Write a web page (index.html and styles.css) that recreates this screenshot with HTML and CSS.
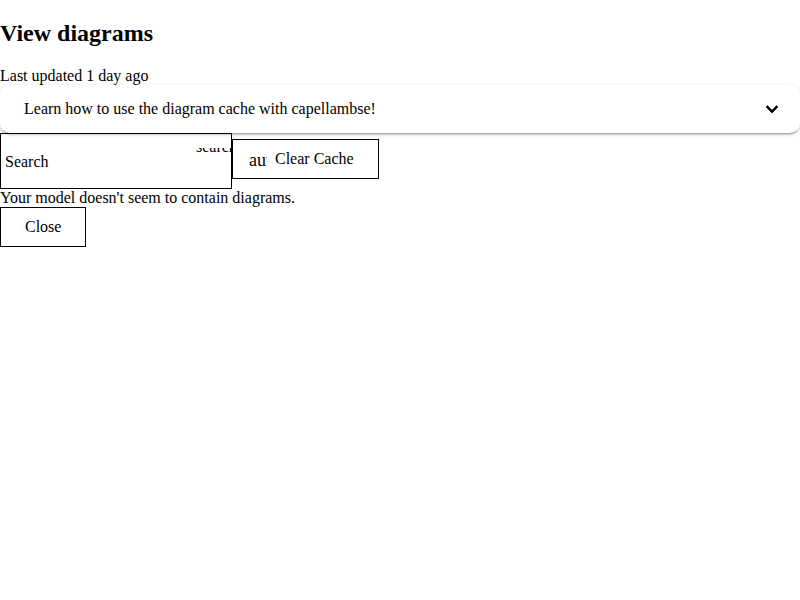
FILE: index.html
```html
<!DOCTYPE html>
<html>
<head>
<meta charset="utf-8">
<link rel="stylesheet" href="styles.css">
</head>
<body>
<h2 class="title">View diagrams</h2>
<div class="updated">Last updated 1 day ago</div>
<div class="panel">
  <div class="panel-header">
    <span class="panel-title">Learn how to use the diagram cache with capellambse!</span>
    <svg class="chevron" width="24" height="24" viewBox="0 0 24 24"><path d="M16.59 8.59L12 13.17 7.41 8.59 6 10l6 6 6-6z"/></svg>
  </div>
</div>
<div class="toolbar">
  <div class="field">
    <span class="field-label">Search</span>
    <span class="field-icon"><span class="field-icon-text">search</span></span>
  </div>
  <button class="btn btn-icon"><span class="icon">autorenew</span>Clear Cache</button>
</div>
<div class="empty">Your model doesn't seem to contain diagrams.</div>
<button class="btn btn-close">Close</button>
</body>
</html>
```

FILE: styles.css
```css
html, body {
  margin: 0;
  padding: 0;
  background: #fff;
  color: #000;
  font-family: "Liberation Serif", "Times New Roman", serif;
  font-size: 16px;
}
.title {
  font-size: 24px;
  font-weight: bold;
  margin: 19.92px 0;
}
.updated {
  line-height: normal;
}
.panel {
  background: #fff;
  border-radius: 10px;
  box-shadow: 0 3px 1px -2px rgba(0,0,0,.2), 0 2px 2px 0 rgba(0,0,0,.14), 0 1px 5px 0 rgba(0,0,0,.12);
}
.panel-header {
  height: 48px;
  display: flex;
  align-items: center;
  padding: 0 16px 0 24px;
}
.panel-title {
  flex: 1;
}
.chevron {
  display: block;
  fill: #000;
  stroke: #000;
  stroke-width: 0.6;
}
.toolbar {
  display: flex;
  align-items: flex-start;
}
.field {
  position: relative;
  box-sizing: border-box;
  width: 232px;
  height: 56px;
  border: 1px solid #000;
  padding-left: 4px;
  display: flex;
  align-items: center;
  overflow: hidden;
}
.field-label {
  margin-top: 3px;
}
.field-icon {
  position: absolute;
  left: 195px;
  top: 14px;
  height: 6px;
  overflow: hidden;
  line-height: 18px;
  white-space: nowrap;
}
.field-icon-text {
  display: block;
  margin-top: -10px;
}
.btn {
  box-sizing: border-box;
  height: 40px;
  display: inline-flex;
  align-items: center;
  border: 1px solid #000;
  background: #fff;
  color: #000;
  font-family: "Liberation Serif", "Times New Roman", serif;
  font-size: 16px;
  margin: 0;
  white-space: nowrap;
}
.btn-icon {
  margin-top: 6px;
  padding: 0 24px 0 16px;
}
.icon {
  display: inline-block;
  width: 18px;
  height: 18px;
  font-size: 18px;
  line-height: 18px;
  overflow: hidden;
  margin-right: 8px;
  margin-top: 2px;
}
.empty {
  line-height: normal;
}
.btn-close {
  padding: 0 24px;
}
```
